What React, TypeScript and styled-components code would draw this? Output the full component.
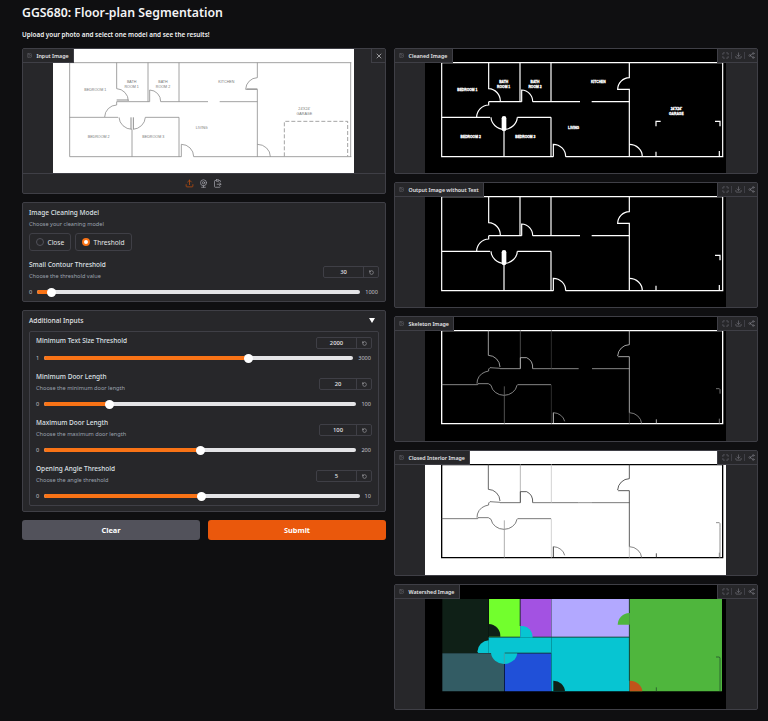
import { FC } from 'react'
import styled, { createGlobalStyle } from 'styled-components'
import {
  ClipboardPaste,
  Download,
  Image as ImageIcon,
  Maximize,
  RotateCcw,
  Share2,
  Upload,
  Webcam,
  X,
} from 'lucide-react'

const GlobalStyle = createGlobalStyle`
  html, body {
    margin: 0;
    background: #0f0f11;
    overflow: hidden;
  }
  body {
    font-family: "Noto Sans", "Open Sans", sans-serif;
    color: #f4f4f5;
  }
`

const Page = styled.div`
  width: 768px;
  height: 721px;
  box-sizing: border-box;
  padding: 6px 10px 0 22px;
`

const Title = styled.h1`
  margin: 0;
  font-size: 12.3px;
  line-height: 14px;
  font-weight: 600;
`

const Subtitle = styled.p`
  margin: 9.5px 0 0;
  font-size: 6.35px;
  line-height: 9px;
  font-weight: 600;
`

const Columns = styled.div`
  display: grid;
  grid-template-columns: 364px 364px;
  gap: 8px;
  margin-top: 9.5px;
`

const Column = styled.div`
  display: flex;
  flex-direction: column;
  gap: 8px;
`

const Panel = styled.section`
  position: relative;
  box-sizing: border-box;
  background: #27272a;
  border: 1px solid #3f3f46;
  border-radius: 2px;
`

const ImagePanel = styled(Panel)`
  height: 126px;
  padding-right: 1px;
  display: flex;
  justify-content: center;
  overflow: hidden;
`

const InputPanel = styled(Panel)`
  height: 146px;
  display: flex;
  flex-direction: column;
  overflow: hidden;
`

const Stage = styled.div`
  height: 124px;
  padding-right: 1px;
  display: flex;
  justify-content: center;
  flex: none;
`

const Toolbar = styled.div`
  flex: 1;
  display: flex;
  justify-content: center;
  align-items: center;
  gap: 5px;
  padding-right: 2px;
  border-top: 1px solid #3f3f46;
  color: #a1a1aa;

  svg:first-child {
    color: #c2500f;
  }
`

const Tab = styled.div`
  position: absolute;
  top: 0;
  left: 0;
  height: 13px;
  padding: 0 4.5px 0 4px;
  display: flex;
  align-items: center;
  gap: 4.5px;
  background: #27272a;
  border-right: 1px solid #3f3f46;
  border-bottom: 1px solid #3f3f46;
  font-size: 5.3px;
  font-weight: 600;
  color: #e4e4e7;

  svg {
    color: #71717a;
  }
`

const Actions = styled.div`
  position: absolute;
  top: 0;
  right: 0;
  box-sizing: border-box;
  height: 14px;
  width: 40px;
  padding-left: 3.5px;
  display: flex;
  align-items: center;
  gap: 2.5px;
  background: #27272a;
  border-left: 1px solid #3f3f46;
  border-bottom: 1px solid #3f3f46;
  color: #7c7c85;
`

const ActionSep = styled.span`
  width: 1px;
  height: 7px;
  background: #3f3f46;
`

const CloseButton = styled.div`
  position: absolute;
  top: 0;
  right: 0;
  width: 13px;
  height: 13px;
  display: flex;
  align-items: center;
  justify-content: center;
  background: #27272a;
  border-left: 1px solid #3f3f46;
  border-bottom: 1px solid #3f3f46;
  color: #d4d4d8;
`

const FormPanel = styled(Panel)<{ $height: number }>`
  height: ${(props) => props.$height}px;
  padding: 5px 6px;
`

const FieldLabel = styled.div`
  font-size: 6.5px;
  line-height: 9px;
  font-weight: 500;
  color: #dfe1e6;
`

const FieldInfo = styled.div`
  margin-top: 3px;
  font-size: 5.6px;
  line-height: 8px;
  color: #9ca3af;
`

const RadioRow = styled.div`
  display: flex;
  gap: 4px;
  margin-top: 5px;
`

const RadioBox = styled.div<{ $width: number }>`
  box-sizing: border-box;
  width: ${(props) => props.$width}px;
  height: 18px;
  padding-left: 6px;
  display: flex;
  align-items: center;
  gap: 3.5px;
  border: 1px solid #3f3f46;
  border-radius: 3px;
  font-size: 6.6px;
  color: #e4e4e7;
`

const RadioDot = styled.span<{ $checked: boolean }>`
  box-sizing: border-box;
  width: 8px;
  height: 8px;
  border-radius: 50%;
  background: ${(props) => (props.$checked ? '#fff' : '#27272a')};
  border: ${(props) =>
    props.$checked ? '2.5px solid #f97316' : '1px solid #52525b'};
`

const SliderBlock = styled.div`
  margin-top: 9px;

  &:first-child {
    margin-top: 4px;
  }
`

const SliderHead = styled.div<{ $compact: boolean }>`
  display: flex;
  justify-content: space-between;
  align-items: flex-start;
  height: ${(props) => (props.$compact ? 13.5 : 21)}px;
`

const NumberField = styled.div<{ $width: number; $compact: boolean }>`
  box-sizing: border-box;
  width: ${(props) => props.$width}px;
  height: 12px;
  margin-top: ${(props) => (props.$compact ? 1.5 : 6)}px;
  display: flex;
  border: 1px solid #3f3f46;
  border-radius: 2px;
  background: #27272a;
  font-size: 5.8px;
  font-weight: 500;
  color: #e4e4e7;
`

const NumberValue = styled.span`
  flex: 1;
  display: flex;
  align-items: center;
  justify-content: center;
  border-right: 1px solid #3f3f46;
`

const ResetButton = styled.span`
  width: 14px;
  display: flex;
  align-items: center;
  justify-content: center;
  color: #d4d4d8;
`

const SliderRow = styled.div<{ $compact: boolean }>`
  display: flex;
  align-items: center;
  gap: 5px;
  height: 10px;
  margin-top: ${(props) => (props.$compact ? 4 : 6)}px;
  padding-right: 1px;
  font-size: 5.6px;
  color: #c4c6cc;
`

const Track = styled.div`
  position: relative;
  flex: 1;
  height: 3.5px;
  border-radius: 2px;
  background: #e4e4e7;
`

const TrackFill = styled.div`
  height: 100%;
  border-radius: 2px;
  background: #f97316;
`

const Thumb = styled.div`
  position: absolute;
  top: 50%;
  width: 9px;
  height: 9px;
  margin: -4.5px 0 0 -4.5px;
  border-radius: 50%;
  background: #fff;
`

const AccordionHead = styled.div`
  display: flex;
  justify-content: space-between;
  align-items: center;
  height: 9px;
  font-size: 6.6px;
  font-weight: 500;
  color: #e4e4e7;
`

const Caret = styled.span`
  width: 0;
  height: 0;
  margin-right: 4px;
  border-left: 3px solid transparent;
  border-right: 3px solid transparent;
  border-top: 5px solid #fff;
`

const InnerBox = styled.div`
  box-sizing: border-box;
  height: 175px;
  margin-top: 5.5px;
  padding: 0 6px;
  border: 1px solid #3f3f46;
  border-radius: 2px;
`

const ButtonRow = styled.div`
  display: grid;
  grid-template-columns: 1fr 1fr;
  gap: 8px;
`

const ActionButton = styled.button<{ $primary?: boolean }>`
  height: 20px;
  padding: 0;
  border: 0;
  border-radius: 3px;
  background: ${(props) => (props.$primary ? '#ea580c' : '#52525b')};
  color: #fff;
  font-family: inherit;
  font-size: 7.4px;
  font-weight: 700;
`

type PlanKind = 'input' | 'cleaned' | 'noText' | 'skeleton' | 'closed' | 'watershed'

const WALLS = [
  'M155 65H1000M155 65V347H490M527 347H1000M998 65V347',
  'M296 65V143A37 37 0 0 1 331 180M296 182H395M428 182H570M605 182H718',
  'M390 65V182M395 182V147A34 34 0 0 1 428 182M483 65V182',
  'M718 65V110A36 36 0 0 0 683 145H718V347',
  'M296 182V192A37 37 0 0 0 260 228M155 229H300M382 229H483M483 229V347M342 265V347',
  'M303 229A40 38 0 0 0 342 265M382 229A40 38 0 0 1 345 265',
  'M490 347V310A37 37 0 0 1 527 347M718 310A39 37 0 0 1 757 347',
]

const GARAGE_ALL = 'M798 256V241H812M975 241H990V256M798 332V347M988 330V347'
const GARAGE_PART = 'M975 241H990V256M798 332V347M988 330V347'

const LABELS: { x: number; y: number; lines: string[] }[] = [
  { x: 232, y: 149, lines: ['BEDROOM 1'] },
  { x: 341, y: 126, lines: ['BATH', 'ROOM 1'] },
  { x: 435, y: 126, lines: ['BATH', 'ROOM 2'] },
  { x: 625, y: 125, lines: ['KITCHEN'] },
  { x: 859, y: 208, lines: ["24'X24'", 'GARAGE'] },
  { x: 551, y: 265, lines: ['LIVING'] },
  { x: 242, y: 292, lines: ['BEDROOM 2'] },
  { x: 406, y: 292, lines: ['BEDROOM 3'] },
]

// tone: brightness of the thinned line in the skeleton image
const THIN_LINES: { d: string; tone: number; width?: number }[] = [
  { d: 'M155 65H998V344H155Z', tone: 1, width: 4 },
  { d: 'M295 64V139A36 36 0 0 1 330 174', tone: 0.75 },
  { d: 'M330 178L300 176L296 180V186L285 189A36 36 0 0 0 261 224', tone: 0.65 },
  { d: 'M155 227H263L264 224H295L303 229A40 36 0 0 0 342 259A40 36 0 0 0 381 229L383 227H483', tone: 0.65 },
  { d: 'M330 179H391', tone: 0.7 },
  { d: 'M391 64V179', tone: 0.35 },
  { d: 'M391 179V146H410A30 33 0 0 1 428 179', tone: 0.8 },
  { d: 'M428 179H566M606 179H718', tone: 0.65 },
  { d: 'M484 64V179M484 227V344', tone: 0.22 },
  { d: 'M718 64V107A36 36 0 0 0 683 141L685 143H718V311', tone: 0.8 },
  { d: 'M718 311V344', tone: 0.3 },
  { d: 'M718 311A38 36 0 0 1 755 344', tone: 0.6 },
  { d: 'M343 232V344', tone: 0.4 },
  { d: 'M490 344V311', tone: 0.95 },
  { d: 'M490 311A36 32 0 0 1 524 337', tone: 0.6 },
  { d: 'M799 331V344', tone: 0.85 },
  { d: 'M978 239H988L990 242V254', tone: 0.55 },
  { d: 'M988 329V344', tone: 0.55 },
]

const WATERSHED: { d: string; fill: string }[] = [
  { d: 'M157 66H296V228H157Z', fill: '#0f2017' },
  { d: 'M297 66H390V180H297Z', fill: '#72ff2d' },
  { d: 'M296 141A36 36 0 0 1 331 179H296Z', fill: '#0f2017' },
  { d: 'M391 66H483V180H391Z', fill: '#a352e2' },
  { d: 'M484 66H718V180H484Z', fill: '#b2a8ff' },
  { d: 'M719 66H996V343H719Z', fill: '#4fb63d' },
  { d: 'M718 108A36 36 0 0 0 683 143H719V108Z', fill: '#4fb63d' },
  { d: 'M157 229H342V343H157Z', fill: '#335c64' },
  { d: 'M344 229H483V343H344Z', fill: '#2050d8' },
  { d: 'M484 181H718V343H484Z', fill: '#07c5d2' },
  { d: 'M296 181H484V228H296Z', fill: '#07c5d2' },
  { d: 'M391 147H400A32 33 0 0 1 428 181H391Z', fill: '#07c5d2' },
  { d: 'M296 190A36 36 0 0 0 262 224L265 228H296Z', fill: '#07c5d2' },
  { d: 'M303 228A40 36 0 0 0 342 261A40 36 0 0 0 382 228Z', fill: '#07c5d2' },
  { d: 'M719 311A38 34 0 0 1 757 343H719Z', fill: '#c0551a' },
  { d: 'M490 311A35 34 0 0 1 525 343H490Z', fill: '#0f2017' },
]

const FloorPlan: FC<{ kind: PlanKind }> = ({ kind }) => {
  const dark = kind !== 'input' && kind !== 'closed'
  const isWall = kind === 'input' || kind === 'cleaned' || kind === 'noText'
  const wallColor = kind === 'input' ? '#8c8c8c' : '#fff'
  const wallWidth = kind === 'input' ? 2.4 : 3.6

  return (
    <svg width="301" height="124" viewBox="105 24 903 372">
      <rect x="105" y="24" width="903" height="372" fill={dark ? '#000' : '#fff'} />

      {isWall && (
        <g fill="none" stroke={wallColor} strokeWidth={wallWidth}>
          {WALLS.map((d) => (
            <path key={d} d={d} />
          ))}
          {kind === 'input' ? (
            <>
              <path d="M339 229V264M346 229V264" strokeWidth={3} />
              <path d="M799 346V241H989V346" strokeDasharray="12 6" />
              <path d="M296 177H331M686 144H718" strokeWidth={3.6} />
            </>
          ) : (
            <path d="M342 232V264" strokeWidth={14} strokeLinecap="round" />
          )}
          {kind === 'cleaned' && <path d={GARAGE_ALL} />}
          {kind === 'noText' && <path d={GARAGE_PART} />}
        </g>
      )}

      {(kind === 'input' || kind === 'cleaned') &&
        LABELS.map((label) => (
          <text
            key={label.lines.join()}
            x={label.x}
            y={label.y}
            textAnchor="middle"
            fontFamily="'Liberation Sans', sans-serif"
            fontSize={kind === 'input' ? 11 : 10}
            fontWeight={kind === 'input' ? 400 : 700}
            fill={kind === 'input' ? '#777' : '#fff'}
            stroke={kind === 'input' ? 'none' : '#fff'}
            strokeWidth={0.8}
          >
            {label.lines.map((line, i) => (
              <tspan key={line} x={label.x} dy={i === 0 ? 0 : 14}>
                {line}
              </tspan>
            ))}
          </text>
        ))}

      {(kind === 'skeleton' || kind === 'closed') && (
        <g fill="none">
          {THIN_LINES.map((line) => {
            const tone = kind === 'skeleton' ? line.tone : 1 - line.tone
            const level = Math.round(tone * 255)
            return (
              <path
                key={line.d}
                d={line.d}
                stroke={`rgb(${level},${level},${level})`}
                strokeWidth={line.width ?? 2.4}
              />
            )
          })}
          {kind === 'closed' && <path d="M990 254V344" stroke="#737373" strokeWidth={2.4} />}
          {kind === 'closed' && <path d="M566 179H606" stroke="#737373" strokeWidth={2.4} />}
        </g>
      )}

      {kind === 'watershed' && (
        <>
          {WATERSHED.map((shape) => (
            <path key={shape.d} d={shape.d} fill={shape.fill} />
          ))}
          <g fill="none" stroke="#1d3f2a" strokeWidth={2}>
            <path d="M297 180H390M428 180H718M718 66V108M718 143V311M390 66V147M344 228H483" />
            <path d="M799 331V343M978 240H988L990 243V343" />
            <path d="M343 229V261" stroke="#5f8f96" />
          </g>
        </>
      )}
    </svg>
  )
}

const ResultImage: FC<{ label: string; kind: PlanKind }> = ({ label, kind }) => (
  <ImagePanel>
    <FloorPlan kind={kind} />
    <Tab>
      <ImageIcon size={5} />
      {label}
    </Tab>
    <Actions>
      <Maximize size={7} />
      <ActionSep />
      <Download size={7} />
      <ActionSep />
      <Share2 size={7} />
    </Actions>
  </ImagePanel>
)

interface SliderProps {
  label: string
  info?: string
  value: number
  min: number
  max: number
  fieldWidth: number
}

const Slider: FC<SliderProps> = ({ label, info, value, min, max, fieldWidth }) => {
  const ratio = (value - min) / (max - min)
  const position = `calc(${ratio} * (100% - 9px) + 4.5px)`
  const compact = !info
  return (
    <SliderBlock>
      <SliderHead $compact={compact}>
        <div>
          <FieldLabel>{label}</FieldLabel>
          {info && <FieldInfo>{info}</FieldInfo>}
        </div>
        <NumberField $width={fieldWidth} $compact={compact}>
          <NumberValue>{value}</NumberValue>
          <ResetButton>
            <RotateCcw size={5} />
          </ResetButton>
        </NumberField>
      </SliderHead>
      <SliderRow $compact={compact}>
        <span>{min}</span>
        <Track>
          <TrackFill style={{ width: position }} />
          <Thumb style={{ left: position }} />
        </Track>
        <span>{max}</span>
      </SliderRow>
    </SliderBlock>
  )
}

export default function App() {
  return (
    <Page>
      <GlobalStyle />
      <Title>GGS680: Floor-plan Segmentation</Title>
      <Subtitle>Upload your photo and select one model and see the results!</Subtitle>
      <Columns>
        <Column>
          <InputPanel>
            <Stage>
              <FloorPlan kind="input" />
            </Stage>
            <Toolbar>
              <Upload size={9} />
              <Webcam size={9} />
              <ClipboardPaste size={9} />
            </Toolbar>
            <Tab>
              <ImageIcon size={5} />
              Input Image
            </Tab>
            <CloseButton>
              <X size={8} />
            </CloseButton>
          </InputPanel>

          <FormPanel $height={100}>
            <FieldLabel>Image Cleaning Model</FieldLabel>
            <FieldInfo>Choose your cleaning model</FieldInfo>
            <RadioRow>
              <RadioBox $width={42}>
                <RadioDot $checked={false} />
                Close
              </RadioBox>
              <RadioBox $width={57}>
                <RadioDot $checked />
                Threshold
              </RadioBox>
            </RadioRow>
            <Slider
              label="Small Contour Threshold"
              info="Choose the threshold value"
              value={30}
              min={0}
              max={1000}
              fieldWidth={56}
            />
          </FormPanel>

          <FormPanel $height={202}>
            <AccordionHead>
              Additional Inputs
              <Caret />
            </AccordionHead>
            <InnerBox>
              <Slider label="Minimum Text Size Threshold" value={2000} min={1} max={3000} fieldWidth={56} />
              <Slider label="Minimum Door Length" info="Choose the minimum door length" value={20} min={0} max={100} fieldWidth={53} />
              <Slider label="Maximum Door Length" info="Choose the maximum door length" value={100} min={0} max={200} fieldWidth={53} />
              <Slider label="Opening Angle Threshold" info="Choose the angle threshold" value={5} min={0} max={10} fieldWidth={56} />
            </InnerBox>
          </FormPanel>

          <ButtonRow>
            <ActionButton type="button">Clear</ActionButton>
            <ActionButton type="button" $primary>
              Submit
            </ActionButton>
          </ButtonRow>
        </Column>

        <Column>
          <ResultImage label="Cleaned Image" kind="cleaned" />
          <ResultImage label="Output Image without Text" kind="noText" />
          <ResultImage label="Skeleton Image" kind="skeleton" />
          <ResultImage label="Closed Interior Image" kind="closed" />
          <ResultImage label="Watershed Image" kind="watershed" />
        </Column>
      </Columns>
    </Page>
  )
}
